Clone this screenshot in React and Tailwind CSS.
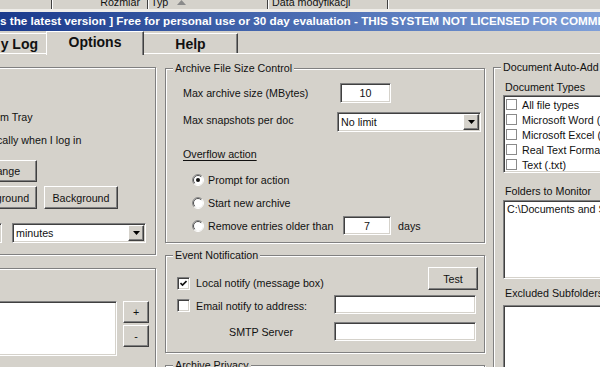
const raised =
  "bg-[#d5d2cb] border border-t-white border-l-white border-r-[#404040] border-b-[#404040] shadow-[inset_-1px_-1px_0_#808080]";
const sunken =
  "bg-white border border-t-[#808080] border-l-[#808080] border-r-white border-b-white shadow-[inset_1px_1px_0_#404040,inset_-1px_-1px_0_#d5d2cb]";

function Group({ title, className, children }) {
  return (
    <div className={`relative border border-[#808080] shadow-[inset_1px_1px_0_#fff,1px_1px_0_#fff] ${className}`}>
      {title && (
        <span className="absolute -top-[8px] left-[7px] bg-[#d5d2cb] px-[2px] leading-[14px] whitespace-nowrap">
          {title}
        </span>
      )}
      {children}
    </div>
  );
}

function Select({ value, className }) {
  return (
    <div className={`${sunken} p-[1px] flex items-center ${className}`}>
      <span className="flex-1 pl-[2px] whitespace-nowrap">{value}</span>
      <div className={`${raised} h-full w-[16px] flex items-center justify-center`}>
        <svg width="7" height="4" viewBox="0 0 7 4">
          <path d="M0 0H7L3.5 4Z" fill="#000" />
        </svg>
      </div>
    </div>
  );
}

function Radio({ checked }) {
  return (
    <svg width="12" height="12" viewBox="0 0 12 12" className="shrink-0">
      <circle cx="6" cy="6" r="5" fill="#fff" />
      <path d="M2.11 9.89A5.5 5.5 0 0 1 9.89 2.11" fill="none" stroke="#8a8a8a" />
      <path d="M9.89 2.11A5.5 5.5 0 0 1 2.11 9.89" fill="none" stroke="#fff" />
      <path d="M2.8 9.2A4.5 4.5 0 0 1 9.2 2.8" fill="none" stroke="#505050" />
      {checked && <circle cx="6" cy="6" r="2" fill="#111" />}
    </svg>
  );
}

function Check({ checked }) {
  return (
    <div className={`${sunken} w-[13px] h-[13px] shrink-0 flex items-center justify-center`}>
      {checked && (
        <svg width="7" height="7" viewBox="0 0 7 7">
          <path d="M0.5 3L2.5 5L6.5 1" fill="none" stroke="#111" strokeWidth="1.6" />
        </svg>
      )}
    </div>
  );
}

function ListCheck({ label }) {
  return (
    <div className="h-[15px] flex items-center whitespace-nowrap">
      <div className="w-[11px] h-[11px] shrink-0 border border-[#8a8a8a] bg-white" />
      <span className="ml-[5px]">{label}</span>
    </div>
  );
}

export default function App() {
  return (
    <div className="w-[600px] h-[367px] overflow-hidden bg-[#d5d2cb] text-[#111] font-['Liberation_Sans',Arial,sans-serif] text-[10.7px] leading-[14px]">
      {/* file list header, cut at the top */}
      <div className="flex h-[9px] overflow-hidden">
        <div className="w-[51px] shrink-0" />
        <div className="w-[96px] shrink-0 flex items-end justify-end pr-[7px] border-l border-[#404040] shadow-[inset_1px_0_0_#fff]">
          <span className="leading-[11px] pb-[1px]">Rozmiar</span>
        </div>
        <div className="w-[120px] shrink-0 flex items-end pl-[3px] border-l border-[#404040] shadow-[inset_1px_0_0_#fff]">
          <span className="leading-[11px] pb-[1px]">Typ</span>
          <svg className="ml-[9px] mb-[4px]" width="9" height="5" viewBox="0 0 9 5">
            <path d="M4.5 0L9 5H0Z" fill="#8a8a8a" />
          </svg>
        </div>
        <div className="w-[120px] shrink-0 flex items-end pl-[4px] border-l border-[#404040] shadow-[inset_1px_0_0_#fff]">
          <span className="leading-[11px] pb-[1px] whitespace-nowrap">Data modyfikacji</span>
        </div>
        <div className="flex-1 border-l border-[#404040] shadow-[inset_1px_0_0_#fff]" />
      </div>
      <div className="h-[3px] bg-[#efede9]" />

      {/* title bar */}
      <div className="h-[19px] bg-linear-to-r from-[#1b3a8c] to-[#7f9fd8] text-white font-bold text-[11.7px] leading-[18px] whitespace-nowrap overflow-hidden">
        s the latest version ] Free for personal use or 30 day evaluation - THIS SYSTEM NOT LICENSED FOR COMMERCIAL USE
      </div>

      {/* tabs */}
      <div className="flex items-end h-[22px] font-bold text-[14px]">
        <div className="w-[46px] h-[20px] shrink-0 border-t border-white pt-[3px] pr-[8px] text-right whitespace-nowrap leading-[14px]">
          y Log
        </div>
        <div className="relative z-10 w-[98px] h-[24px] -mb-[2px] shrink-0 bg-[#d5d2cb] border-t border-l border-white border-r border-r-[#404040] shadow-[inset_-1px_0_0_#808080] pt-[3px] text-center leading-[14px]">
          Options
        </div>
        <div className="w-[94px] h-[20px] shrink-0 border-t border-white border-r border-r-[#404040] shadow-[inset_-1px_0_0_#808080] pt-[3px] text-center leading-[14px]">
          Help
        </div>
      </div>

      {/* panel */}
      <div className="flex border-t border-white">
        {/* left column */}
        <div className="w-[156px] shrink-0">
          <Group className="mt-[13px] -ml-[60px] w-[216px] h-[188px] pl-[59px]">
            <div className="mt-[42px] whitespace-nowrap">m Tray</div>
            <div className="mt-[9px] -ml-[3px] whitespace-nowrap">cally when I log in</div>
            <div className={`${raised} mt-[13px] -ml-[34px] w-[71px] h-[22px] flex items-center justify-center`}>
              Change
            </div>
            <div className="mt-[4px] flex gap-[7px]">
              <div className={`${raised} -ml-[34px] w-[71px] h-[23px] flex items-center justify-center`}>
                Foreground
              </div>
              <div className={`${raised} w-[74px] h-[23px] flex items-center justify-center`}>Background</div>
            </div>
            <div className="mt-[14px] flex gap-[10px]">
              <div className={`${sunken} -ml-[40px] w-[42px] h-[20px]`} />
              <Select value="minutes" className="w-[134px] h-[20px]" />
            </div>
          </Group>
          <Group className="mt-[13px] -ml-[60px] w-[216px] h-[120px] pl-[59px]">
            <div className="mt-[32px] flex gap-[6px]">
              <div className={`${sunken} -ml-[40px] w-[157px] h-[55px]`} />
              <div className="flex flex-col gap-[2px]">
                <div className={`${raised} w-[26px] h-[22px] flex items-center justify-center`}>+</div>
                <div className={`${raised} w-[26px] h-[22px] flex items-center justify-center`}>-</div>
              </div>
            </div>
          </Group>
        </div>

        {/* center column */}
        <div className="w-[320px] shrink-0 ml-[9px]">
          <Group title="Archive File Size Control" className="mt-[14px] h-[175px] pl-[17px]">
            <div className="mt-[14px] flex items-center h-[20px]">
              <span className="w-[157px] shrink-0">Max archive size (MBytes)</span>
              <div className={`${sunken} w-[51px] h-[20px] flex items-center justify-center`}>10</div>
            </div>
            <div className="mt-[9px] flex items-start h-[20px]">
              <span className="w-[154px] shrink-0 pt-[1px]">Max snapshots per doc</span>
              <Select value="No limit" className="w-[144px] h-[20px]" />
            </div>
            <div className="mt-[15px] underline underline-offset-[2px]">Overflow action</div>
            <div className="mt-[12px] flex items-center h-[14px] pl-[9px]">
              <Radio checked />
              <span className="ml-[4px]">Prompt for action</span>
            </div>
            <div className="mt-[9px] flex items-center h-[14px] pl-[9px]">
              <Radio />
              <span className="ml-[4px]">Start new archive</span>
            </div>
            <div className="mt-[6px] flex items-center h-[19px] pl-[9px]">
              <Radio />
              <span className="ml-[4px] w-[135px] shrink-0 whitespace-nowrap">Remove entries older than</span>
              <div className={`${sunken} w-[48px] h-[19px] flex items-center justify-center`}>7</div>
              <span className="ml-[7px]">days</span>
            </div>
          </Group>

          <Group title="Event Notification" className="mt-[12px] h-[98px] pl-[11px] pr-[6px]">
            <div className="mt-[11px] flex items-end justify-between h-[23px]">
              <div className="flex items-center h-[14px]">
                <Check checked />
                <span className="ml-[6px]">Local notify (message box)</span>
              </div>
              <div className={`${raised} w-[50px] h-[23px] flex items-center justify-center`}>Test</div>
            </div>
            <div className="mt-[5px] flex items-center h-[19px]">
              <div className="w-[157px] shrink-0 flex items-center pt-[2px]">
                <Check />
                <span className="ml-[6px]">Email notify to address:</span>
              </div>
              <div className={`${sunken} w-[142px] h-[19px]`} />
            </div>
            <div className="mt-[8px] flex items-center h-[19px]">
              <span className="w-[157px] shrink-0 pl-[52px]">SMTP Server</span>
              <div className={`${sunken} w-[142px] h-[19px]`} />
            </div>
          </Group>

          <Group title="Archive Privacy" className="mt-[12px] h-[40px]" />
        </div>

        {/* right column */}
        <div className="w-[160px] shrink-0 ml-[8px]">
          <Group title="Document Auto-Add" className="mt-[13px] h-[330px] pl-[9px]">
            <div className="mt-[12px] ml-[2px] whitespace-nowrap">Document Types</div>
            <div className={`${sunken} mt-[1px] w-[140px] h-[78px] pl-[2px] pt-[1px] overflow-hidden`}>
              <ListCheck label="All file types" />
              <ListCheck label="Microsoft Word (.doc)" />
              <ListCheck label="Microsoft Excel (.xls)" />
              <ListCheck label="Real Text Format (.rtf)" />
              <ListCheck label="Text (.txt)" />
            </div>
            <div className="mt-[11px] ml-[2px] whitespace-nowrap">Folders to Monitor</div>
            <div className={`${sunken} mt-[2px] w-[140px] h-[79px] pl-[3px] pt-[1px] overflow-hidden`}>
              <div className="whitespace-nowrap">C:\Documents and Settings\</div>
            </div>
            <div className="mt-[7px] ml-[2px] whitespace-nowrap">Excluded Subfolders</div>
            <div className={`${sunken} mt-[5px] w-[140px] h-[80px]`} />
          </Group>
        </div>
      </div>
    </div>
  );
}
